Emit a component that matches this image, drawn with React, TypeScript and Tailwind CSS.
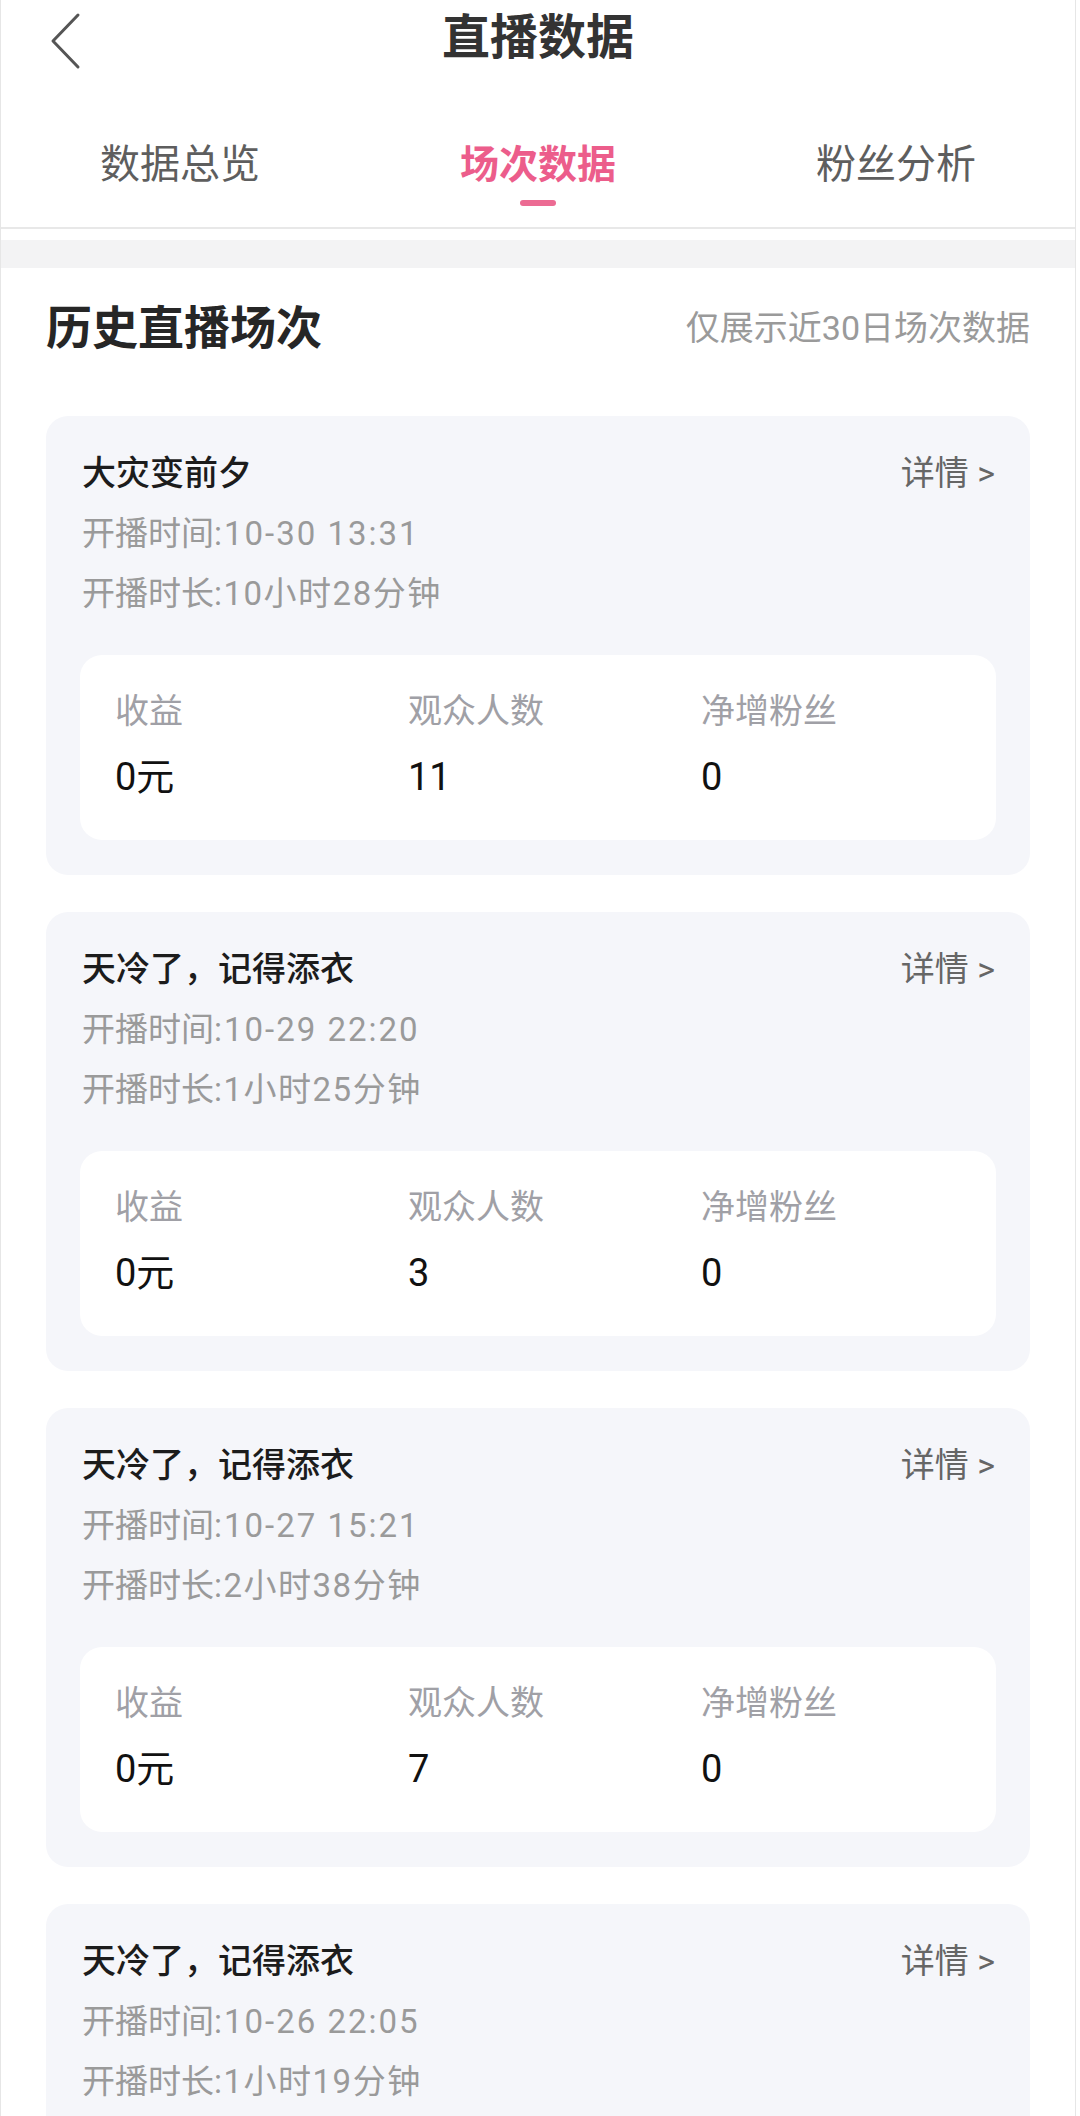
import React from 'react';

const font = { fontFamily: '"Roboto", "Noto Sans CJK SC", sans-serif' };

type Session = {
  title: string;
  start: string;
  duration: string;
  income: string;
  viewers: string;
  fans: string;
};

const sessions: Session[] = [
  { title: '大灾变前夕', start: '10-30 13:31', duration: '10小时28分钟', income: '0元', viewers: '11', fans: '0' },
  { title: '天冷了，记得添衣', start: '10-29 22:20', duration: '1小时25分钟', income: '0元', viewers: '3', fans: '0' },
  { title: '天冷了，记得添衣', start: '10-27 15:21', duration: '2小时38分钟', income: '0元', viewers: '7', fans: '0' },
  { title: '天冷了，记得添衣', start: '10-26 22:05', duration: '1小时19分钟', income: '0元', viewers: '0', fans: '0' },
];

const tabs = ['数据总览', '场次数据', '粉丝分析'];

// the last card runs off the bottom of the screen, its stats box is never seen
const SessionCard: React.FC<{ s: Session; cut?: boolean }> = ({ s, cut }) => (
  <div className="h-[459px] shrink-0 rounded-[22px] bg-[#f5f6fa] px-[34px] pt-[27px]">
    <div className="flex items-center justify-between pl-[2px] leading-[60px]">
      <span className="text-[34px] font-medium text-[#1c1c1c]">{s.title}</span>
      <span className="pr-[1px] text-[34px] text-[#666666]">详情 &gt;</span>
    </div>
    <div className="pl-[2px] text-[33px] leading-[61px] text-[#9a9a9a]">
      开播时间<span className="tracking-[2px]">:{s.start}</span>
    </div>
    <div className="pl-[2px] text-[33px] leading-[60px] text-[#9a9a9a]">
      开播时长<span className="tracking-[1.5px]">:{s.duration}</span>
    </div>
    {!cut && (
      <div className="mt-[31px] grid h-[185px] grid-cols-[293px_293px_1fr] rounded-[22px] bg-white pl-[35px] pt-[34px]">
        {[
          ['收益', s.income],
          ['观众人数', s.viewers],
          ['净增粉丝', s.fans],
        ].map(([label, value]) => (
          <div key={label} className="flex flex-col">
            <span className="text-[34px] leading-[44px] text-[#a0a0a6]">{label}</span>
            <span className="mt-[20px] text-[38px] leading-[48px] text-[#111111]">{value}</span>
          </div>
        ))}
      </div>
    )}
  </div>
);

export default function App() {
  return (
    <div style={font} className="h-[2116px] w-[1076px] overflow-hidden border-x border-[#e6e6e6] bg-white">
      <div className="relative flex h-[76px] items-center justify-center">
        <svg className="absolute left-[49px] top-[12px]" width="32" height="58" viewBox="0 0 32 58" fill="none">
          <polyline points="28,3 3,29 28,55" stroke="#555555" strokeWidth="3" strokeLinecap="round" strokeLinejoin="round" />
        </svg>
        <h1 className="text-[48px] font-bold leading-[60px] text-[#333333]">直播数据</h1>
      </div>

      <div className="grid grid-cols-3 items-start pt-[65px] pb-[21px]">
        {tabs.map((t, i) => (
          <div key={t} className="flex flex-col items-center">
            <span
              className={
                i === 1
                  ? 'text-[39px] font-bold leading-[48px] text-[#ec5d8b]'
                  : 'text-[40px] leading-[48px] text-[#5e5e5e]'
              }
            >
              {t}
            </span>
            <span className={i === 1 ? 'mt-[11px] h-[6px] w-[36px] rounded-full bg-[#ec6b93]' : 'mt-[11px] h-[6px] w-[36px]'} />
          </div>
        ))}
      </div>
      <div className="h-[2px] bg-[#e8e8e8]" />
      <div className="h-[11px]" />
      <div className="h-[28px] bg-[#f3f3f4]" />

      <div className="px-[45px] pt-[32px]">
        <div className="flex items-center justify-between">
          <h2 className="text-[46px] font-bold leading-[56px] text-[#262626]">历史直播场次</h2>
          <span className="text-[34px] leading-[56px] text-[#9a9a9a]">仅展示近30日场次数据</span>
        </div>
        <div className="mt-[60px] flex flex-col gap-[37px]">
          {sessions.map((s, i) => (
            <SessionCard key={i} s={s} cut={i === sessions.length - 1} />
          ))}
        </div>
      </div>
    </div>
  );
}
